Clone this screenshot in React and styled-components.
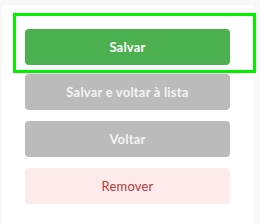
import React from 'react';
import styled, { createGlobalStyle } from 'styled-components';

const GlobalStyle = createGlobalStyle`
  html, body {
    margin: 0;
    padding: 0;
    background: #f8f8f8;
    font-family: 'Lato', 'Noto Sans', sans-serif;
  }
`;

const Card = styled.div`
  box-sizing: border-box;
  width: 251px;
  height: 219px;
  margin: 5px 0 0 2px;
  padding-top: 8px;
  background: #ffffff;
`;

const Highlight = styled.div`
  width: 221px;
  margin: 0 0 1px 11px;
  padding: 13px 7px 5px 9px;
  border: 3px solid #00f000;
`;

const Actions = styled.div`
  display: flex;
  flex-direction: column;
  gap: 11px;
  padding: 0 23px;
`;

const palette = {
  primary: { bg: '#4caf50', fg: '#ffffff', weight: 700 },
  muted: { bg: '#bbbbbb', fg: '#f4f4f4', weight: 700 },
  danger: { bg: '#fdeaea', fg: '#b23b3b', weight: 400 },
};

const Button = styled.button`
  display: block;
  width: 205px;
  height: 36px;
  border: none;
  border-radius: 4px;
  padding: 0;
  cursor: pointer;
  font-family: inherit;
  font-size: 13px;
  font-weight: ${({ $variant }) => palette[$variant].weight};
  letter-spacing: 0.2px;
  color: ${({ $variant }) => palette[$variant].fg};
  background: ${({ $variant }) => palette[$variant].bg};
`;

const App = () => {
  return (
    <>
      <GlobalStyle />
      <Card>
        <Highlight>
          <Button $variant="primary">Salvar</Button>
        </Highlight>
        <Actions>
          <Button $variant="muted">Salvar e voltar à lista</Button>
          <Button $variant="muted">Voltar</Button>
          <Button $variant="danger">Remover</Button>
        </Actions>
      </Card>
    </>
  );
};

export default App;
